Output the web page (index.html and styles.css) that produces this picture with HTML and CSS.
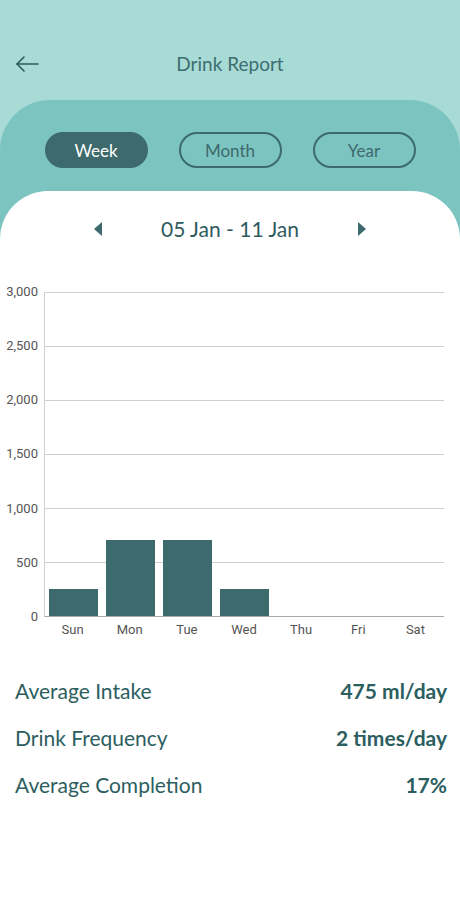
FILE: index.html
```html
<!DOCTYPE html>
<html lang="en">
<head>
  <meta charset="UTF-8" />
  <meta name="viewport" content="width=device-width, initial-scale=1.0" />
  <title>Drink Report</title>
  <link rel="stylesheet" href="styles.css">
</head>
<body>
  <header class="topbar">
    <button class="back" aria-label="Back">
      <svg width="24" height="18" viewBox="0 0 24 18" fill="none" stroke="#2f5a5e" stroke-width="1.6" stroke-linecap="round" stroke-linejoin="round">
        <path d="M23 9H2" />
        <path d="M9 2L2 9l7 7" />
      </svg>
    </button>
    <h1 class="title">Drink Report</h1>
  </header>

  <section class="band">
    <div class="tabs">
      <button class="tab active">Week</button>
      <button class="tab">Month</button>
      <button class="tab">Year</button>
    </div>

    <main class="card">
      <div class="range">
        <span class="tri left"></span>
        <span class="range-text">05 Jan - 11 Jan</span>
        <span class="tri right"></span>
      </div>

      <!-- weekly chart, max 3000 ml -->
      <div class="chart">
        <div class="y-labels">
          <span>3,000</span>
          <span>2,500</span>
          <span>2,000</span>
          <span>1,500</span>
          <span>1,000</span>
          <span>500</span>
          <span>0</span>
        </div>
        <div class="plot-wrap">
          <div class="plot">
            <div class="col"><div class="bar" style="height: 8.33%"></div></div>
            <div class="col"><div class="bar" style="height: 23.33%"></div></div>
            <div class="col"><div class="bar" style="height: 23.33%"></div></div>
            <div class="col"><div class="bar" style="height: 8.33%"></div></div>
            <div class="col"></div>
            <div class="col"></div>
            <div class="col"></div>
          </div>
          <div class="x-labels">
            <span>Sun</span>
            <span>Mon</span>
            <span>Tue</span>
            <span>Wed</span>
            <span>Thu</span>
            <span>Fri</span>
            <span>Sat</span>
          </div>
        </div>
      </div>

      <ul class="stats">
        <li><span>Average Intake</span><b>475 ml/day</b></li>
        <li><span>Drink Frequency</span><b>2 times/day</b></li>
        <li><span>Average Completion</span><b>17%</b></li>
      </ul>
    </main>
  </section>
</body>
</html>
```

FILE: styles.css
```css
* {
  box-sizing: border-box;
}

body {
  margin: 0;
  height: 900px;
  overflow: hidden;
  background: #a8dad6;
  font-family: Lato, "Open Sans", sans-serif;
  color: #2f5a5e;
}

/* Header with back arrow and title */
.topbar {
  position: relative;
  height: 100px;
  display: flex;
  align-items: center;
  justify-content: center;
  padding-top: 26px;
}

.back {
  position: absolute;
  left: 15px;
  top: 55px;
  padding: 0;
  border: 0;
  background: none;
  display: flex;
}

.title {
  margin: 0;
  font-size: 19px;
  font-weight: 400;
  color: #3d6e70;
}

/* Teal band holding the period tabs */
.band {
  background: #7cc4c0;
  border-radius: 50px 50px 0 0;
  padding-top: 32px;
  height: 800px;
  display: flex;
  flex-direction: column;
}

.tabs {
  display: flex;
  justify-content: center;
  gap: 31px;
  margin-bottom: 23px;
}

.tab {
  width: 103px;
  height: 36px;
  border: 2px solid #3d6a6d;
  border-radius: 18px;
  background: transparent;
  font-family: inherit;
  font-size: 17px;
  color: #3d6a6d;
  padding: 0;
}

.tab.active {
  background: #3d6a6d;
  color: #fff;
}

/* White sheet */
.card {
  flex: 1;
  background: #fff;
  border-radius: 48px 48px 0 0;
  padding-top: 25px;
}

.range {
  display: flex;
  align-items: center;
  justify-content: center;
  gap: 59px;
}

.range-text {
  font-size: 21px;
  color: #2f5a5e;
  line-height: 26px;
}

.tri {
  width: 0;
  height: 0;
  border-top: 7px solid transparent;
  border-bottom: 7px solid transparent;
}

.tri.left {
  border-right: 8px solid #3d6a6d;
}

.tri.right {
  border-left: 8px solid #3d6a6d;
}

/* Chart */
.chart {
  display: flex;
  margin-top: 50px;
  font-family: Roboto, sans-serif;
  font-size: 13px;
  color: #555;
}

.y-labels {
  width: 44px;
  height: 339px;
  margin-top: -7px;
  padding-right: 6px;
  display: flex;
  flex-direction: column;
  justify-content: space-between;
  align-items: flex-end;
  line-height: 14px;
}

.plot-wrap {
  width: 400px;
}

.plot {
  height: 325px;
  display: flex;
  align-items: flex-end;
  border-left: 1px solid #cfcfcf;
  background: repeating-linear-gradient(
    to bottom,
    #cfcfcf 0,
    #cfcfcf 1px,
    transparent 1px,
    transparent 54px
  );
  box-shadow: inset 0 -1px 0 #a9a9a9;
}

.col {
  flex: 1;
  height: 100%;
  display: flex;
  align-items: flex-end;
  padding: 0 4px 1px;
}

.bar {
  width: 100%;
  background: #3d6a6d;
}

.x-labels {
  display: flex;
  padding-top: 6px;
  line-height: 14px;
}

.x-labels span {
  flex: 1;
  text-align: center;
}

/* Summary rows */
.stats {
  list-style: none;
  margin: 30px 0 0;
  padding: 0 13px 0 15px;
}

.stats li {
  display: flex;
  justify-content: space-between;
  align-items: center;
  height: 47px;
  font-size: 21px;
  color: #2c5e60;
}

.stats b {
  font-weight: 700;
}
```
